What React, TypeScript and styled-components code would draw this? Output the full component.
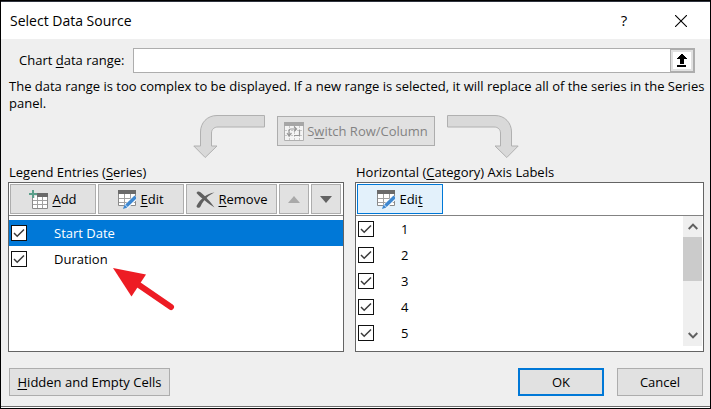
import React, { useState } from "react";
import styled, { createGlobalStyle, css } from "styled-components";

const GlobalStyle = createGlobalStyle`
  *, *::before, *::after { box-sizing: border-box; }
  body {
    margin: 0;
    background: #efefef;
    font-family: "Open Sans", "Noto Sans", sans-serif;
    font-size: 13px;
    line-height: 17px;
    color: #000;
  }
  button, input { font: inherit; color: inherit; }
  u { text-decoration: underline; text-underline-offset: 2px; text-decoration-skip-ink: none; }
`;

const Dialog = styled.main`
  display: flex;
  flex-direction: column;
  min-height: 100vh;
  border: 1px solid #000;
  background: #efefef;
`;

const TitleBar = styled.header`
  display: flex;
  align-items: center;
  height: 38px;
  padding: 0 20px 0 9px;
  border-top: 1px solid #30343f;
  background: #fff;
`;

const Title = styled.h1`
  flex: 1;
  margin: 0;
  font-size: 14px;
  font-weight: 400;
  line-height: 20px;
`;

const TitleButton = styled.button`
  display: flex;
  align-items: center;
  justify-content: center;
  width: 18px;
  height: 24px;
  margin-left: 39px;
  padding: 0;
  border: 0;
  background: none;
  font-size: 15px;
`;

const Body = styled.div`
  display: flex;
  flex: 1;
  flex-direction: column;
  padding: 9px 0 10px 7px;
  border-bottom: 1px solid #6b6b6b;
  box-shadow: 0 1px 0 #fff;
  margin-bottom: 1px;
`;

const RangeRow = styled.div`
  display: flex;
  align-items: center;
  height: 25px;
  padding: 0 15px 0 11px;
`;

const RangeLabel = styled.label`
  width: 114px;
  white-space: nowrap;
`;

const RangeInput = styled.input`
  flex: 1;
  min-width: 0;
  height: 25px;
  padding: 0 4px;
  border: 1px solid #adadad;
  border-right: 0;
  background: #fff;
  outline: none;
`;

const PickButton = styled.button`
  display: flex;
  align-items: center;
  justify-content: center;
  width: 25px;
  height: 25px;
  padding: 0;
  border: 2px solid #adadad;
  border-left-width: 1px;
  background: #fff;
  box-shadow: inset 0 0 0 2px #e1e1e1;
`;

const Notice = styled.p`
  margin: 5px 0 3px;
  padding-left: 1px;
`;

const SwitchRow = styled.div`
  display: flex;
  justify-content: center;
  gap: 12px;
  height: 44px;
  padding-right: 6px;
`;

const buttonLook = css`
  display: flex;
  align-items: center;
  justify-content: center;
  padding: 0;
  border: 1px solid #adadad;
  background: #e1e1e1;
  white-space: nowrap;
`;

const SwitchButton = styled.button`
  ${buttonLook}
  gap: 3px;
  width: 158px;
  height: 30px;
  margin-top: 1px;
  color: #838383;
`;

const Panels = styled.div`
  display: grid;
  grid-template-columns: 336fr 349fr;
  column-gap: 11px;
  margin-top: 5px;
  padding-right: 6px;
`;

const PanelHeading = styled.h2`
  margin: 0 0 1px;
  padding-left: 1px;
  font-size: 13px;
  font-weight: 400;
  line-height: 17px;
`;

const Panel = styled.div`
  position: relative;
  display: flex;
  flex-direction: column;
  height: 170px;
  border: 1px solid #646464;
  background: #fff;
`;

const Toolbar = styled.div`
  display: flex;
  gap: 2px;
  padding: 1px;
  border-bottom: 1px solid #838383;
`;

const ToolButton = styled.button<{ $size: "arrow" | "normal" | "wide"; $active?: boolean }>`
  ${buttonLook}
  gap: 4px;
  width: ${(p) => ({ arrow: 30, normal: 86, wide: 91 })[p.$size]}px;
  height: 30px;
  ${(p) =>
    p.$active &&
    css`
      border-color: #0078d7;
      background: #e3f1fb;
    `}
`;

const ListArea = styled.div`
  display: flex;
  flex: 1;
  min-height: 0;
`;

const List = styled.ul<{ $inset?: boolean }>`
  flex: 1;
  margin: 0;
  padding: ${(p) => (p.$inset ? "4px 0 0" : "0")};
  list-style: none;
`;

const Item = styled.label<{ $selected?: boolean }>`
  display: flex;
  align-items: center;
  gap: 27px;
  height: 26px;
  padding-left: 2px;
  background: ${(p) => (p.$selected ? "#0078d7" : "transparent")};
  color: ${(p) => (p.$selected ? "#fff" : "#000")};
`;

const CheckWrap = styled.span`
  display: grid;
  width: 16px;
  height: 16px;

  > * {
    grid-area: 1 / 1;
  }
`;

const CheckInput = styled.input`
  appearance: none;
  width: 16px;
  height: 16px;
  margin: 0;
  border: 1px solid #111;
  background: #fff;

  & + svg {
    visibility: hidden;
    pointer-events: none;
  }
  &:checked + svg {
    visibility: visible;
  }
`;

const ScrollBar = styled.div`
  display: flex;
  flex-direction: column;
  width: 19px;
  height: 130px;
  margin-right: 1px;
  background: #efefef;
`;

const ScrollButton = styled.button`
  display: flex;
  align-items: center;
  justify-content: center;
  height: 21px;
  padding: 0;
  border: 0;
  background: none;
`;

const ScrollTrack = styled.div`
  flex: 1;
`;

const ScrollThumb = styled.div`
  height: 44px;
  background: #cbcbcb;
`;

const Pointer = styled.svg`
  position: absolute;
  left: 103px;
  top: 84px;
  pointer-events: none;
`;

const Footer = styled.footer`
  display: flex;
  gap: 13px;
  margin-top: 16px;
  padding: 0 7px 0 1px;
`;

const FooterButton = styled.button<{ $wide?: boolean; $primary?: boolean }>`
  ${buttonLook}
  width: ${(p) => (p.$wide ? 161 : 86)}px;
  height: 28px;
  margin-right: ${(p) => (p.$wide ? "auto" : "0")};
  ${(p) => p.$primary && "border: 2px solid #0078d7;"}
`;

const CloseIcon = () => (
  <svg width="12" height="12" viewBox="0 0 12 12" stroke="#000" strokeWidth="1.1">
    <path d="M0 0L12 12M12 0L0 12" />
  </svg>
);

const PickIcon = () => (
  <svg width="10" height="13" viewBox="0 0 10 13" shapeRendering="crispEdges">
    <path d="M4 0h2v1h1v1h1v1h1v1h1v1H7v5H3V5H0V4h1V3h1V2h1V1h1zM0 11h9v2H0z" fill="#000" />
  </svg>
);

const BentArrow = ({ flip }: { flip?: boolean }) => (
  <svg width="72" height="44" viewBox="0 0 72 44">
    <path
      transform={flip ? "translate(72 0) scale(-1 1)" : undefined}
      d="M71.5 0.5H24C14 0.5 7.500 8 7.500 17V31H.8L12.200 42.500L24 31H18.500V18C18.500 14.500 21 12 25 12H71.500Z"
      fill="#d9d9d9"
      stroke="#b0b0b0"
    />
  </svg>
);

const SwitchIcon = () => (
  <svg width="20" height="19" viewBox="0 0 20 19" fill="none">
    <path d="M.5 .5h19v18H.5z" fill="#f4f4f4" stroke="#b0b0b0" />
    <path d="M0 0h20v4H0z" fill="#a6a6a6" />
    <path d="M1 8.500h18M1 13.500h18M5.500 4v15M10.500 4v15M15.500 4v15" stroke="#c8c8c8" strokeDasharray="2 1" />
    <path d="M5 13V9q0-2 2-2h5M3 11l2 3 2.500-3M10 4.500L12.500 7 10 9.500M10 13.500h5.500V8" stroke="#979797" strokeWidth="1.200" />
  </svg>
);

const AddIcon = () => (
  <svg width="19" height="19" viewBox="0 0 19 19" fill="none">
    <path d="M3.500 4.500h15v14h-15z" fill="#fff" stroke="#8a8a8a" />
    <path d="M8.500 6v12M13.500 6v12M4 10.500h14M4 14.500h14" stroke="#a0a0a0" />
    <path d="M8 3h11v4H8z" fill="#6a6a6a" />
    <path d="M4 0v8M0 4h8" stroke="#e1e1e1" strokeWidth="4" />
    <path d="M4 0v8M0 4h8" stroke="#5a9e8a" strokeWidth="2" />
  </svg>
);

const EditIcon = () => (
  <svg width="18" height="19" viewBox="0 0 18 19" fill="none">
    <path d="M.5 .5h17v15H.5z" fill="#fff" stroke="#8a8a8a" />
    <path d="M6.500 4v12M12.500 4v12M1 8.500h16M1 12.500h16" stroke="#a0a0a0" />
    <path d="M0 0h18v4H0z" fill="#6a6a6a" />
    <path d="M18 7L7.500 17" stroke="#fff" strokeWidth="5" />
    <path d="M17.700 6.800L8.500 15.800" stroke="#3f88d0" strokeWidth="3.400" />
    <path d="M5 19l1.500-4.500 3 3z" fill="#3f88d0" />
  </svg>
);

const RemoveIcon = () => (
  <svg width="19" height="17" viewBox="0 0 19 17" fill="#606060">
    <path d="M.5 2C1 0 3 0 4.500 1.200C8 4 15 11 18.500 16.500C13 13 5 7 .5 2Z" />
    <path d="M18.500 1.500C13 4 8 8 4.500 15.500C3.500 17.500 .5 17 .5 15C4 8 11 2.500 18.500 1.500Z" />
  </svg>
);

const Triangle = ({ up }: { up?: boolean }) => (
  <svg width="12" height="7" viewBox="0 0 12 7">
    <path d={up ? "M0 7L6 0L12 7Z" : "M0 0H12L6 7Z"} fill={up ? "#a9a9a9" : "#626262"} />
  </svg>
);

const Chevron = ({ up }: { up?: boolean }) => (
  <svg width="10" height="7" viewBox="0 0 10 7" fill="none" stroke="#606060" strokeWidth="2">
    <path d={up ? "M.7 6L5 1.600L9.300 6" : "M.7 1L5 5.400L9.300 1"} />
  </svg>
);

function CheckBox({ defaultChecked = true }: { defaultChecked?: boolean }) {
  return (
    <CheckWrap>
      <CheckInput type="checkbox" defaultChecked={defaultChecked} />
      <svg width="16" height="16" viewBox="0 0 16 16" fill="none" stroke="#3a3a3a" strokeWidth="1.500">
        <path d="M3 8L6.200 11.200L13 4.500" />
      </svg>
    </CheckWrap>
  );
}

const series = ["Start Date", "Duration"];
const categories = ["1", "2", "3", "4", "5"];

export default function App() {
  const [range, setRange] = useState("");

  return (
    <>
      <GlobalStyle />
      <Dialog>
        <TitleBar>
          <Title>Select Data Source</Title>
          <TitleButton aria-label="Help">?</TitleButton>
          <TitleButton aria-label="Close">
            <CloseIcon />
          </TitleButton>
        </TitleBar>
        <Body>
          <RangeRow>
            <RangeLabel htmlFor="range">
              Chart <u>d</u>ata range:
            </RangeLabel>
            <RangeInput id="range" value={range} onChange={(e) => setRange(e.target.value)} />
            <PickButton aria-label="Collapse dialog">
              <PickIcon />
            </PickButton>
          </RangeRow>
          <Notice>
            The data range is too complex to be displayed. If a new range is selected, it will replace all of the
            series in the Series panel.
          </Notice>
          <SwitchRow>
            <BentArrow />
            <SwitchButton disabled>
              <SwitchIcon />
              <span>
                S<u>w</u>itch Row/Column
              </span>
            </SwitchButton>
            <BentArrow flip />
          </SwitchRow>
          <Panels>
            <section>
              <PanelHeading>
                Legend Entries (<u>S</u>eries)
              </PanelHeading>
              <Panel>
                <Toolbar>
                  <ToolButton $size="normal">
                    <AddIcon />
                    <span>
                      <u>A</u>dd
                    </span>
                  </ToolButton>
                  <ToolButton $size="normal">
                    <EditIcon />
                    <span>
                      <u>E</u>dit
                    </span>
                  </ToolButton>
                  <ToolButton $size="wide">
                    <RemoveIcon />
                    <span>
                      <u>R</u>emove
                    </span>
                  </ToolButton>
                  <ToolButton $size="arrow" aria-label="Move up" disabled>
                    <Triangle up />
                  </ToolButton>
                  <ToolButton $size="arrow" aria-label="Move down">
                    <Triangle />
                  </ToolButton>
                </Toolbar>
                <List $inset>
                  {series.map((name, i) => (
                    <li key={name}>
                      <Item $selected={i === 0}>
                        <CheckBox />
                        {name}
                      </Item>
                    </li>
                  ))}
                </List>
                <Pointer width="64" height="46" viewBox="0 0 64 46" fill="#ed1c24">
                  <path d="M1 1L34 7.500L19.500 29.500Z" />
                  <path d="M24 16L59 40" stroke="#ed1c24" strokeWidth="6" strokeLinecap="round" />
                </Pointer>
              </Panel>
            </section>
            <section>
              <PanelHeading>
                Horizontal (<u>C</u>ategory) Axis Labels
              </PanelHeading>
              <Panel>
                <Toolbar>
                  <ToolButton $size="normal" $active>
                    <EditIcon />
                    <span>
                      Edi<u>t</u>
                    </span>
                  </ToolButton>
                </Toolbar>
                <ListArea>
                  <List>
                    {categories.map((name) => (
                      <li key={name}>
                        <Item>
                          <CheckBox />
                          {name}
                        </Item>
                      </li>
                    ))}
                  </List>
                  <ScrollBar>
                    <ScrollButton aria-label="Scroll up">
                      <Chevron up />
                    </ScrollButton>
                    <ScrollTrack>
                      <ScrollThumb />
                    </ScrollTrack>
                    <ScrollButton aria-label="Scroll down">
                      <Chevron />
                    </ScrollButton>
                  </ScrollBar>
                </ListArea>
              </Panel>
            </section>
          </Panels>
          <Footer>
            <FooterButton $wide>
              <span>
                <u>H</u>idden and Empty Cells
              </span>
            </FooterButton>
            <FooterButton $primary>OK</FooterButton>
            <FooterButton>Cancel</FooterButton>
          </Footer>
        </Body>
      </Dialog>
    </>
  );
}
